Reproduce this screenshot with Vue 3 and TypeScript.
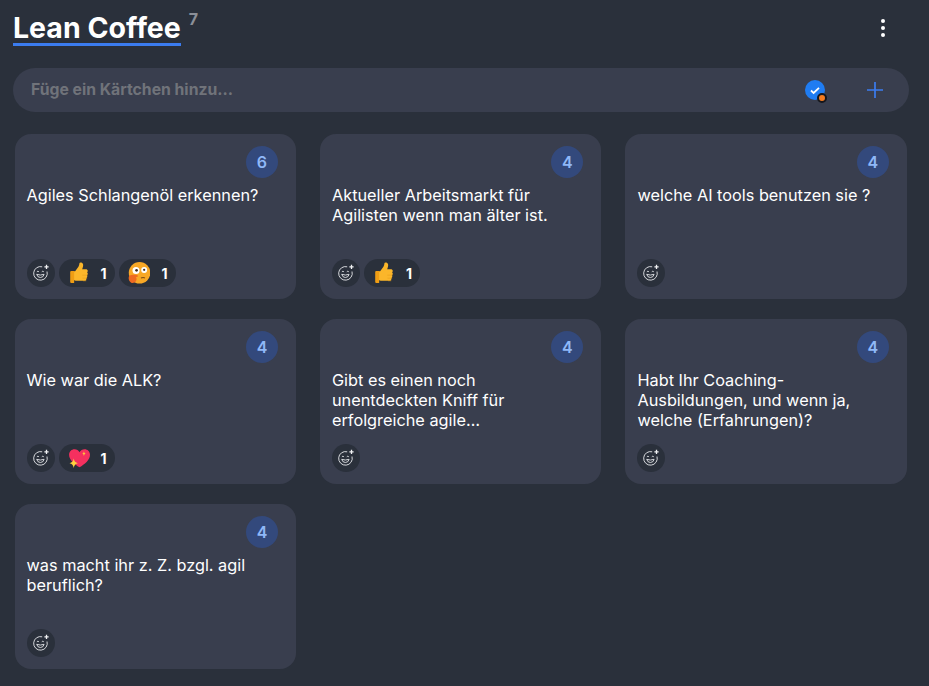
<script setup lang="ts">
interface Reaction { kind: 'thumb' | 'think' | 'heart'; count: number }
interface Card { votes: number; text: string; reactions: Reaction[] }

const cards: Card[] = [
  { votes: 6, text: 'Agiles Schlangenöl erkennen?', reactions: [{ kind: 'thumb', count: 1 }, { kind: 'think', count: 1 }] },
  { votes: 4, text: 'Aktueller Arbeitsmarkt für Agilisten wenn man älter ist.', reactions: [{ kind: 'thumb', count: 1 }] },
  { votes: 4, text: 'welche AI tools benutzen sie ?', reactions: [] },
  { votes: 4, text: 'Wie war die ALK?', reactions: [{ kind: 'heart', count: 1 }] },
  { votes: 4, text: 'Gibt es einen noch unentdeckten Kniff für erfolgreiche agile…', reactions: [] },
  { votes: 4, text: 'Habt Ihr Coaching-Ausbildungen, und wenn ja, welche (Erfahrungen)?', reactions: [] },
  { votes: 4, text: 'was macht ihr z. Z. bzgl. agil beruflich?', reactions: [] },
]
</script>

<template>
  <div class="page">
    <header class="head">
      <h1 class="title">Lean Coffee</h1>
      <span class="count">7</span>
      <button class="menu" aria-label="Menü">
        <i></i><i></i><i></i>
      </button>
    </header>

    <div class="add">
      <span class="placeholder">Füge ein Kärtchen hinzu...</span>
      <span class="status">
        <svg width="20" height="20" viewBox="0 0 20 20">
          <circle cx="10" cy="10" r="10" fill="#1f7cf2" />
          <path d="M6 10.500l2.600 2.400L14 7.800" fill="none" stroke="#fff" stroke-width="1.800" />
        </svg>
        <span class="dot"></span>
      </span>
      <svg class="plus" width="16" height="16" viewBox="0 0 16 16">
        <path d="M8 0v16M0 8h16" stroke="#3b7cf0" stroke-width="1.700" fill="none" />
      </svg>
    </div>

    <main class="grid">
      <article v-for="(card, i) in cards" :key="i" class="card">
        <div class="top"><span class="votes">{{ card.votes }}</span></div>
        <p class="text">{{ card.text }}</p>
        <div class="foot">
          <button class="smile" aria-label="Reaktion">
            <svg width="18" height="18" viewBox="0 0 18 18" fill="none" stroke="#d6d8dc" stroke-width="1">
              <path d="M15 7.500a6.800 6.800 0 1 1-4.800-4.700" />
              <path d="M4.900 7.800q1-1.200 2 0M9.800 7.800q1-1.200 2 0" />
              <path d="M4.700 10.300q3.700 1.500 7.400 0q-.7 3.200-3.700 3.200t-3.700-3.200z" />
              <path d="M14.500 .8v4.200M12.400 2.900h4.200" stroke="#f0f1f3" stroke-width="1.300" />
            </svg>
          </button>
          <span v-for="r in card.reactions" :key="r.kind" class="pill" :class="r.kind">
            <svg v-if="r.kind === 'thumb'" class="emoji" viewBox="0 0 20 20">
              <path d="M4 8.500h2.500l3-4.200c.6-1 .8-2.200.9-3.200.1-.9 2.900-.9 3.300 1 .3 1.500-.3 3.200-.8 4.400h3.400c1.900 0 2 2.300 1 2.900 1 .6.900 2.300-.2 2.700.8.700.5 2.200-.5 2.600.4 1-.2 2.300-1.500 2.400H8c-1.500 0-2.300-.6-2.600-.8H4z" fill="#fbb62a" />
              <path d="M2 9.200a1 1 0 0 1 1-1h2.600v11H3a1 1 0 0 1-1-1z" fill="#ef9d14" />
              <path d="M13 12h4.800M13.200 14.700h4.200M13.600 17h3" stroke="#e8a01d" stroke-width=".6" fill="none" />
            </svg>
            <svg v-else-if="r.kind === 'think'" class="emoji" viewBox="0 0 20 20">
              <circle cx="10.500" cy="9.800" r="9.800" fill="#f8a826" />
              <circle cx="7.300" cy="7.800" r="3.200" fill="#fff" />
              <circle cx="14.700" cy="7.300" r="2.700" fill="#fff" />
              <circle cx="7.800" cy="7.600" r="1.200" fill="#3d2a1c" />
              <circle cx="14.700" cy="7.100" r="1" fill="#3d2a1c" />
              <path d="M11.800 14.600q2-1.100 3.600 0" stroke="#7a4a14" stroke-width="1" fill="none" />
              <path d="M1.200 12.600c1.500-1 5.300-1.100 7.100-.7 1 .3.900 1.500 0 1.700l-1.200.2c.7.700 1 2 .3 3.300-.8 1.600-2.800 2.600-4.500 1.700C.8 18 0 14.100 1.200 12.600z" fill="#ee6a22" />
            </svg>
            <svg v-else class="emoji" viewBox="0 0 20 20">
              <path d="M10.500 18.500C6 15.500 1 12 1 7c0-3 2.400-5 4.900-5 2 0 3.700 1 4.600 2.700C11.400 3 13.100 2 15.100 2c2.500 0 4.900 2 4.900 5 0 5-5 8.500-9.500 11.500z" fill="#f5305f" />
              <path d="M14.500 3.800q.3 2 1.500 2.200-1.200.2-1.500 2.200-.3-2-1.500-2.200 1.200-.2 1.500-2.200z" fill="#ffc83d" />
              <path d="M5.200 10.500q.5 3.600 3.800 4.200-3.300.6-3.800 4.300-.5-3.700-3.800-4.300 3.300-.6 3.800-4.200z" fill="#ffd23f" />
            </svg>
            <b>{{ r.count }}</b>
          </span>
        </div>
      </article>
    </main>
  </div>
</template>

<style scoped>
.page {
  box-sizing: border-box;
  height: 686px;
  overflow: hidden;
  padding: 0 20px 0 13px;
  background: #2a303b;
  font-family: Inter, "Open Sans", sans-serif;
  color: #fff;
}
.head {
  display: flex;
  align-items: flex-start;
  height: 68px;
}
.title {
  margin: 13px 0 0;
  height: 30px;
  border-bottom: 3px solid #3b7cf0;
  font-size: 28.500px;
  line-height: 30px;
  font-weight: 700;
}
.count {
  margin: 10px 0 0 8px;
  font-size: 16px;
  line-height: 18px;
  font-weight: 700;
  color: #8b8f98;
}
.menu {
  display: flex;
  flex-direction: column;
  gap: 3px;
  margin: 19px 24px 0 auto;
  padding: 0;
  border: 0;
  background: none;
}
.menu i {
  width: 4px;
  height: 4px;
  border-radius: 50%;
  background: #fff;
}
.add {
  display: flex;
  align-items: center;
  height: 44px;
  padding: 0 26px 0 18px;
  border-radius: 22px;
  background: #393e4e;
}
.placeholder {
  flex: 1;
  padding-bottom: 2px;
  font-size: 15.750px;
  font-weight: 700;
  color: #70737a;
}
.status {
  position: relative;
  display: flex;
  margin-right: 42px;
}
.dot {
  position: absolute;
  right: -2px;
  bottom: -3px;
  box-sizing: border-box;
  width: 10px;
  height: 10px;
  border-radius: 50%;
  border: 2px solid #14161c;
  background: #f47b20;
}
.grid {
  display: grid;
  grid-template-columns: repeat(3, 1fr);
  column-gap: 24px;
  row-gap: 20px;
  margin: 22px 2.100px 0 1.500px;
}
.card {
  display: flex;
  flex-direction: column;
  box-sizing: border-box;
  height: 165px;
  padding: 12px;
  border-radius: 16px;
  background: #393e4e;
}
.top {
  display: flex;
  justify-content: flex-end;
  margin-right: 6px;
}
.votes {
  display: flex;
  align-items: center;
  justify-content: center;
  width: 32px;
  height: 32px;
  border-radius: 50%;
  background: #33497c;
  color: #8fb8f8;
  font-size: 16px;
  font-weight: 600;
}
.text {
  flex: 1;
  margin: 7px 0 0;
  padding-right: 12px;
  font-size: 16.300px;
  line-height: 20px;
  color: #fff;
}
.foot {
  display: flex;
  gap: 4px;
  height: 28px;
}
.smile {
  display: flex;
  align-items: center;
  justify-content: center;
  width: 28px;
  height: 28px;
  padding: 0;
  border: 0;
  border-radius: 50%;
  background: #2a303b;
}
.pill {
  display: flex;
  align-items: center;
  width: 56px;
  height: 28px;
  box-sizing: border-box;
  padding: 0 8px 0 9px;
  border-radius: 14px;
  background: #2a303b;
}
.pill.think {
  width: 57px;
}
.emoji {
  width: 22px;
  height: 22px;
}
.pill b {
  margin-left: auto;
  font-size: 14px;
  font-weight: 700;
}
</style>
